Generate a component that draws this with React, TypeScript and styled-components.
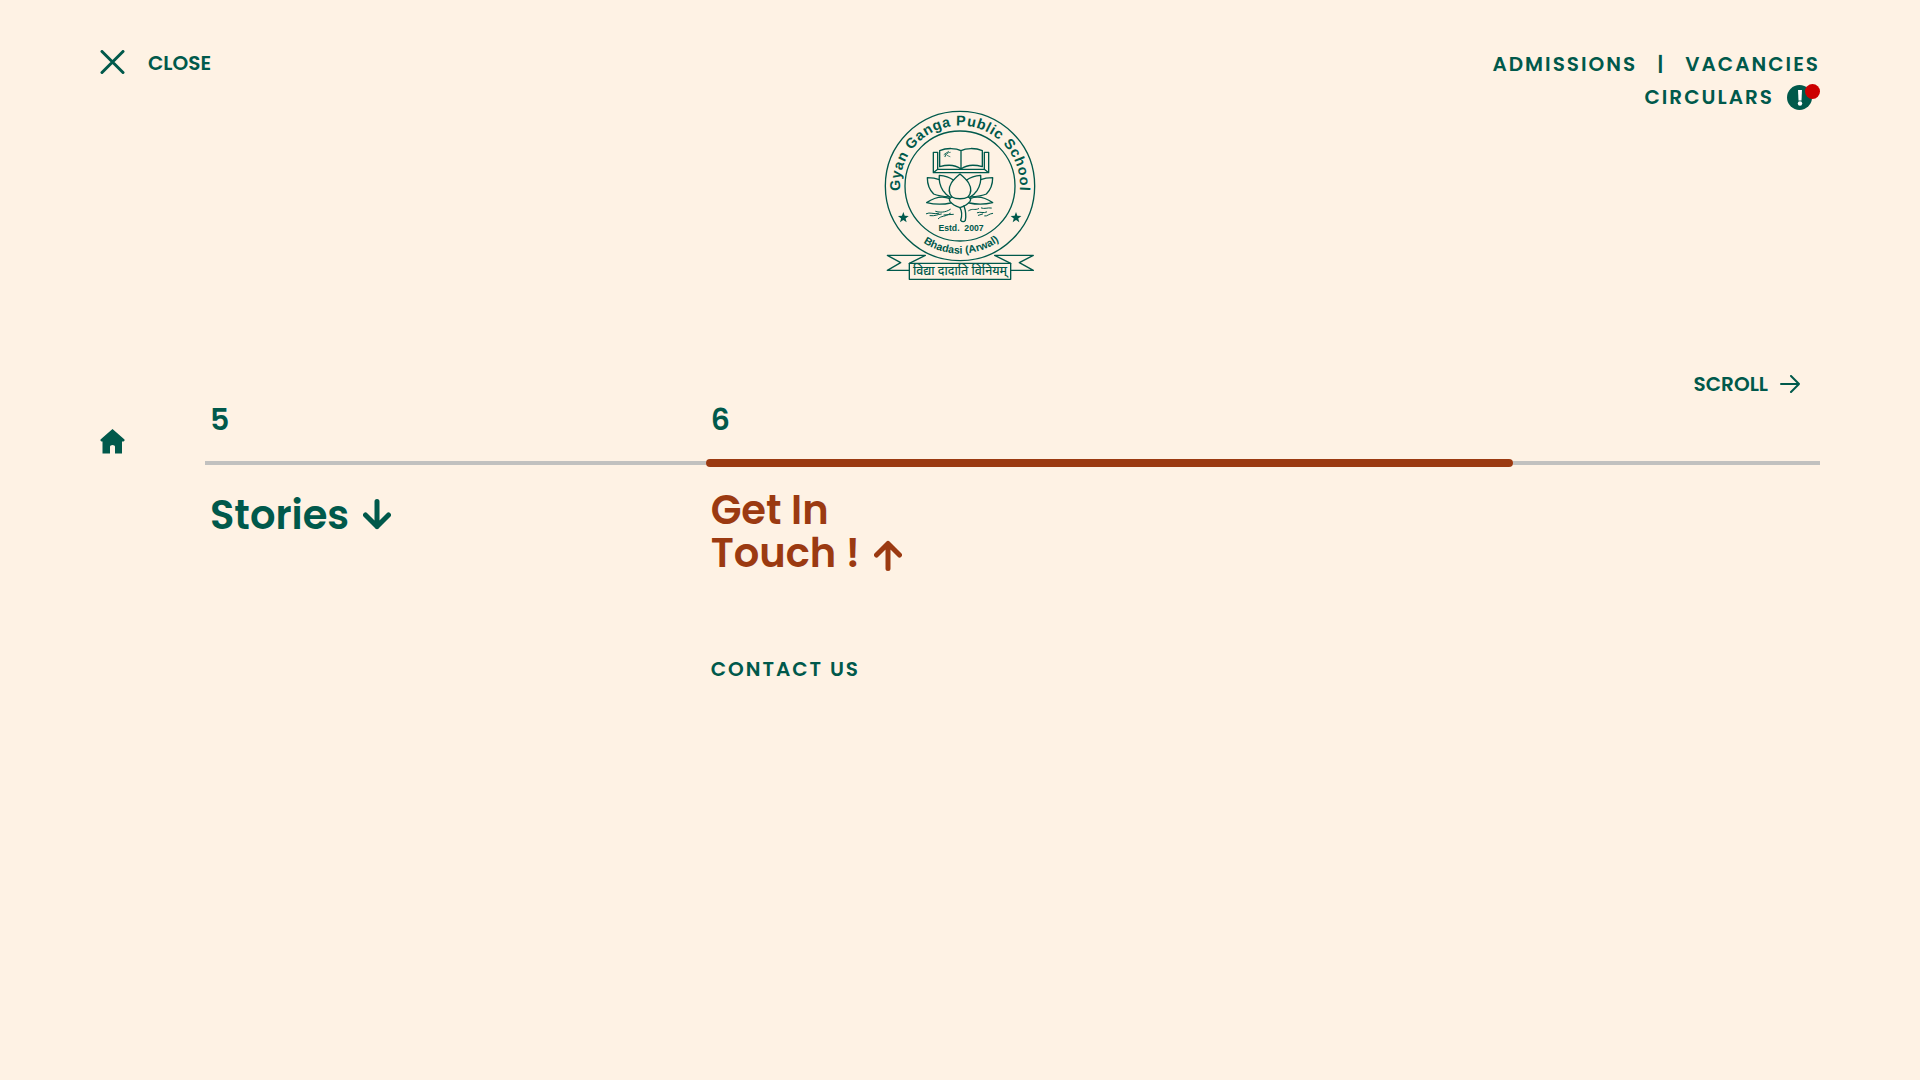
import React from "react";
import styled, { createGlobalStyle } from "styled-components";

const green = "#00594b";
const rust = "#9b3a11";
const cream = "#fef2e4";

const GlobalStyle = createGlobalStyle`
  *, *::before, *::after { box-sizing: border-box; }
  body {
    margin: 0;
    background: ${cream};
    color: ${green};
    font-family: Poppins, Inter, "Noto Sans", sans-serif;
    font-weight: 600;
  }
  a { color: inherit; text-decoration: none; }
  ul { margin: 0; padding: 0; list-style: none; }
`;

const Page = styled.div`
  min-height: 100vh;
  padding: 0 100px;
  display: flex;
  flex-direction: column;
`;

const Header = styled.header`
  display: grid;
  grid-template-columns: 1fr auto 1fr;
  align-items: start;
`;

const TextButton = styled.button`
  display: inline-flex;
  align-items: center;
  padding: 0;
  border: 0;
  background: none;
  color: inherit;
  font: inherit;
  font-size: 20px;
  line-height: 26px;
  cursor: pointer;
`;

const CloseButton = styled(TextButton)`
  justify-self: start;
  gap: 23px;
  margin-top: 50px;
`;

const LogoLink = styled.a`
  display: block;
  margin-top: 106px;
  svg { display: block; }
`;

const UtilityNav = styled.nav`
  display: flex;
  flex-direction: column;
  align-items: flex-end;
  margin-top: 48px;
`;

const UtilityRow = styled.div`
  display: flex;
  align-items: center;
  gap: 20px;
  font-size: 20px;
  line-height: 33px;
  letter-spacing: 2px;
`;

const CircularsLink = styled.a`
  display: inline-flex;
  align-items: center;
  gap: 13px;
`;

const Alert = styled.span`
  position: relative;
  display: grid;
  place-items: center;
  width: 25px;
  height: 25px;
  margin-right: 8px;
  border-radius: 50%;
  background: ${green};

  &::after {
    content: "";
    position: absolute;
    top: -1px;
    right: -8px;
    width: 15px;
    height: 15px;
    border-radius: 50%;
    background: #cc0000;
  }
`;

const ScrollBar = styled.div`
  display: flex;
  justify-content: flex-end;
  margin-top: 89px;
  padding-right: 20px;
`;

const ScrollButton = styled(TextButton)`
  gap: 12px;
`;

const Main = styled.nav`
  display: grid;
  grid-template-columns: 105px 1fr;
  align-items: start;
`;

const HomeLink = styled.a`
  display: block;
  width: 25px;
  margin-top: 32px;
  svg { display: block; }
`;

const Timeline = styled.ul`
  display: grid;
  grid-template-columns: 31fr 50fr 19fr;
`;

const Segment = styled.li`
  display: flex;
  flex-direction: column;
`;

const StepNumber = styled.span`
  height: 62px;
  padding-left: 5px;
  font-size: 30px;
  line-height: 46px;
`;

const Track = styled.span<{ $active?: boolean }>`
  height: 8px;
  border-radius: ${(p) => (p.$active ? "4px" : "0")};
  background: ${(p) =>
    p.$active ? rust : "linear-gradient(transparent 2px, #c1c1bf 2px 6px, transparent 6px)"};
`;

const TitleButton = styled.button<{ $open?: boolean }>`
  display: flex;
  align-items: flex-end;
  align-self: flex-start;
  gap: 14px;
  margin: 22px 0 0 5px;
  padding: 0;
  border: 0;
  background: none;
  color: ${(p) => (p.$open ? rust : green)};
  font: inherit;
  font-size: 40px;
  line-height: ${(p) => (p.$open ? 43 : 53)}px;
  text-align: left;
  cursor: pointer;

  svg { margin-bottom: ${(p) => (p.$open ? 3 : 12)}px; }
`;

const SubLinks = styled.ul`
  margin: 79px 0 0 5px;
  font-size: 20px;
  line-height: 30px;
  letter-spacing: 2px;
`;

function VerticalArrow({ up }: { up?: boolean }) {
  return (
    <svg width="28" height="32" viewBox="0 0 28 32" fill="none" stroke="currentColor" strokeWidth="5" strokeLinecap="round" strokeLinejoin="round" aria-hidden="true">
      <path d={up ? "M14 28.500V3.500M2.500 15 14 3.500 25.500 15" : "M14 3.500v25M2.500 17 14 28.500 25.500 17"} />
    </svg>
  );
}

function Star({ x }: { x: number }) {
  const points = Array.from({ length: 10 }, (_, i) => {
    const r = i % 2 ? 7 : 17;
    const a = (i * Math.PI) / 5 - Math.PI / 2;
    return `${(x + r * Math.cos(a)).toFixed(1)},${(353 + r * Math.sin(a)).toFixed(1)}`;
  }).join(" ");
  return <polygon points={points} fill={green} stroke="none" />;
}

const EmblemText = styled.text`
  fill: ${green};
  stroke: none;
  font-family: "Liberation Sans", Arial, sans-serif;
  font-weight: 700;
  text-anchor: middle;
`;

const MottoText = styled(EmblemText)`
  font-family: "Noto Sans Devanagari", "Noto Sans", sans-serif;
  font-weight: 500;
`;

function Emblem() {
  return (
    <svg width="160" height="176" viewBox="30 18 480 528" fill="none" stroke={green} strokeWidth="4" strokeLinejoin="round" strokeLinecap="round" role="img" aria-label="Gyan Ganga Public School">
      <defs>
        <path id="arc-top" d="M91 276A180 180 0 1 1 449 276" />
        <path id="arc-bottom" d="M94 358A202 202 0 0 0 446 358" />
      </defs>
      <circle cx="270" cy="258" r="224" />
      <circle cx="270" cy="258" r="165" />
      <EmblemText fontSize="43" letterSpacing="2">
        <textPath href="#arc-top" startOffset="50%">Gyan Ganga Public School</textPath>
      </EmblemText>
      <EmblemText fontSize="32">
        <textPath href="#arc-bottom" startOffset="51%">Bhadasi (Arwal)</textPath>
      </EmblemText>
      <Star x={100} />
      <Star x={438} />

      {/* open book */}
      <path d="M203 157H190V218H356V157H343M203 157V208H343V157M190 218 203 208M356 218 343 208" />
      <path d="M273 152C258 144 230 143 209 152V200C230 194 256 194 273 207C290 194 316 194 337 200V152C316 143 288 144 273 152V207" />
      <path strokeWidth="2" d="M222 164 236 154M224 169 233 160M230 159 241 157M231 166 240 170M226 160V170" />

      {/* lotus */}
      <path d="M270 222C281 231 290 239 296 249C304 263 306 277 294 291C282 298 258 298 246 291C234 277 236 263 244 249C250 239 259 231 270 222Z" />
      <path d="M250 240C238 231 223 227 208 226C206 242 211 259 219 272C225 281 232 287 240 291" />
      <path d="M290 240C302 231 317 227 332 226C334 242 329 259 321 272C315 281 308 287 300 291" />
      <path d="M208 239C196 234 184 233 172 233C172 250 179 270 191 282C204 288 224 290 240 291" />
      <path d="M332 239C344 234 356 233 368 233C368 250 361 270 349 282C336 288 316 290 300 291" />
      <path d="M240 296C216 286 190 294 170 308C191 313 219 314 242 309" />
      <path d="M300 296C324 286 348 294 368 308C347 313 321 314 298 309" />
      <path d="M246 291C238 294 236 298 240 304C246 312 258 319 270 323C282 319 294 312 300 304C304 298 302 294 294 291" />
      <path d="M270 323C277 336 276 349 272 361C276 366 283 366 286 361C289 346 287 332 282 318" />

      {/* water */}
      <path strokeWidth="3" d="M169 341C180 335 190 344 206 340M197 334C210 338 226 338 241 328M180 347C196 349 202 343 214 342M205 356C214 346 224 352 241 340M222 345 250 343M296 332C308 324 314 332 326 326M334 324C344 328 352 322 364 324M322 338C332 334 340 341 350 336M325 346 338 342M344 348C352 350 356 341 368 340" />

      <EmblemText x="273" y="393" fontSize="26">Estd.&#160; 2007</EmblemText>

      {/* ribbon */}
      <path d="M118 490H422V538H118Z" />
      <path d="M118 490 166 466H52L92 488 52 511H118M422 490 374 466H490L448 488 490 511H422" />
      <MottoText x="270" y="525" fontSize="37">विद्या दादाति विनियम्</MottoText>
    </svg>
  );
}

export default function App() {
  return (
    <>
      <GlobalStyle />
      <Page>
        <Header>
          <CloseButton type="button">
            <svg width="25" height="26" viewBox="0 0 25 26" fill="none" stroke="currentColor" strokeWidth="3" strokeLinecap="round" aria-hidden="true">
              <path d="M2 1.500 23 22.500M23 1.500 2 22.500" />
            </svg>
            CLOSE
          </CloseButton>
          <LogoLink href="#home">
            <Emblem />
          </LogoLink>
          <UtilityNav aria-label="Quick links">
            <UtilityRow>
              <a href="#admissions">ADMISSIONS</a>
              <span>|</span>
              <a href="#vacancies">VACANCIES</a>
            </UtilityRow>
            <UtilityRow>
              <CircularsLink href="#circulars">
                CIRCULARS
                <Alert>
                  <svg width="6" height="16" viewBox="0 0 6 16" fill="#fff" aria-hidden="true">
                    <path d="M1 0H5L4.500 10.500H1.500Z" />
                    <circle cx="3" cy="13.500" r="2.200" />
                  </svg>
                </Alert>
              </CircularsLink>
            </UtilityRow>
          </UtilityNav>
        </Header>

        <ScrollBar>
          <ScrollButton type="button">
            SCROLL
            <svg width="20" height="18" viewBox="0 0 20 18" fill="none" stroke="currentColor" strokeWidth="2" strokeLinecap="round" strokeLinejoin="round" aria-hidden="true">
              <path d="M1 9H19M11 1 19 9 11 17" />
            </svg>
          </ScrollButton>
        </ScrollBar>

        <Main aria-label="Main menu">
          <HomeLink href="#home" aria-label="Home">
            <svg width="25" height="25" viewBox="0 0 25 25" fill="currentColor" aria-hidden="true">
              <path d="M12.500 0 24.500 10.500Q25 12.300 23.500 12.400H22V24.500H15V17.500Q15 16 12.500 16Q10 16 10 17.500V24.500H2.500V12.400H1.500Q0 12.300 .5 10.500Z" />
            </svg>
          </HomeLink>
          <Timeline>
            <Segment>
              <StepNumber>5</StepNumber>
              <Track />
              <TitleButton type="button">
                Stories
                <VerticalArrow />
              </TitleButton>
            </Segment>
            <Segment>
              <StepNumber>6</StepNumber>
              <Track $active />
              <TitleButton type="button" $open>
                <span>
                  Get In
                  <br />
                  Touch !
                </span>
                <VerticalArrow up />
              </TitleButton>
              <SubLinks>
                <li>
                  <a href="#contact">CONTACT US</a>
                </li>
              </SubLinks>
            </Segment>
            <Segment aria-hidden="true">
              <StepNumber />
              <Track />
            </Segment>
          </Timeline>
        </Main>
      </Page>
    </>
  );
}
